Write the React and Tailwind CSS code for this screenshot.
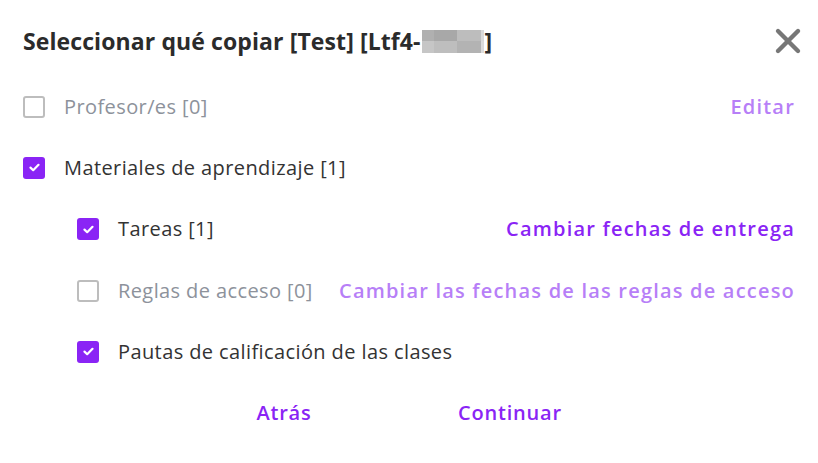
import { X } from 'lucide-react';

const body = { fontFamily: '"Open Sans", "Noto Sans", sans-serif' };

function Box({ checked }) {
  if (!checked) {
    return <span className="w-[22px] h-[22px] shrink-0 rounded-[3px] border-2 border-[#bdbdbd] bg-white" />;
  }
  return (
    <span className="w-[22px] h-[22px] shrink-0 rounded-[3px] bg-[#8a24f5] flex items-center justify-center">
      <svg width="11" height="9" viewBox="0 0 11 9">
        <path d="M1.5 4.6 L4.2 7.2 L9.5 1.8" fill="none" stroke="white" strokeWidth="2.2" strokeLinecap="round" strokeLinejoin="round" />
      </svg>
    </span>
  );
}

function Row({ checked, label, link, linkFaded, indent }) {
  return (
    <div className={`h-[61.3px] flex items-center ${indent ? 'pl-[77px]' : 'pl-[23px]'} pr-[23px]`}>
      <Box checked={checked} />
      <span className={`ml-[19px] text-[20px] tracking-[0.4px] ${checked ? 'text-[#333333]' : 'text-[#8d929b]'}`}>{label}</span>
      {link && (
        <button className={`ml-auto text-[20px] font-semibold tracking-[1.2px] ${linkFaded ? 'text-[#b77ff7]' : 'text-[#8a24f5]'}`}>
          {link}
        </button>
      )}
    </div>
  );
}

export default function App() {
  return (
    <div className="w-[818px] h-[463px] bg-white" style={body}>
      <div className="h-[82px] flex items-center pl-[23px] pr-[10px]">
        <h2 className="text-[23px] font-bold text-[#2b2b2b] tracking-[0.1px] flex items-center">
          Seleccionar qué copiar [Test] [Ltf4-
          <span className="inline-grid grid-cols-[12px_23px_24px_3px] grid-rows-[11px_12px] mx-[1px]">
            <span className="bg-[#b0b0b0]" />
            <span className="bg-[#a8a8a8]" />
            <span className="bg-[#bdbdbd]" />
            <span className="bg-[#d9d9d9]" />
            <span className="bg-[#c6c6c6]" />
            <span className="bg-[#bebebe]" />
            <span className="bg-[#b3b3b3]" />
            <span className="bg-[#dcdcdc]" />
          </span>
          ]
        </h2>
        <X className="ml-auto text-[#777777]" size={40} strokeWidth={2.6} />
      </div>
      <div className="-mt-[6px]">
        <Row checked={false} label="Profesor/es [0]" link="Editar" linkFaded />
        <Row checked label="Materiales de aprendizaje [1]" />
        <Row checked indent label="Tareas [1]" link="Cambiar fechas de entrega" />
        <Row checked={false} indent label="Reglas de acceso [0]" link="Cambiar las fechas de las reglas de acceso" linkFaded />
        <Row checked indent label="Pautas de calificación de las clases" />
      </div>
      <div className="flex justify-center gap-[26px] pr-[24px] mt-[1px]">
        <button className="w-[200px] h-[60px] text-[20px] font-semibold text-[#8a24f5] tracking-[0.8px]">Atrás</button>
        <button className="w-[200px] h-[60px] text-[20px] font-semibold text-[#8a24f5] tracking-[0.8px]">Continuar</button>
      </div>
    </div>
  );
}
